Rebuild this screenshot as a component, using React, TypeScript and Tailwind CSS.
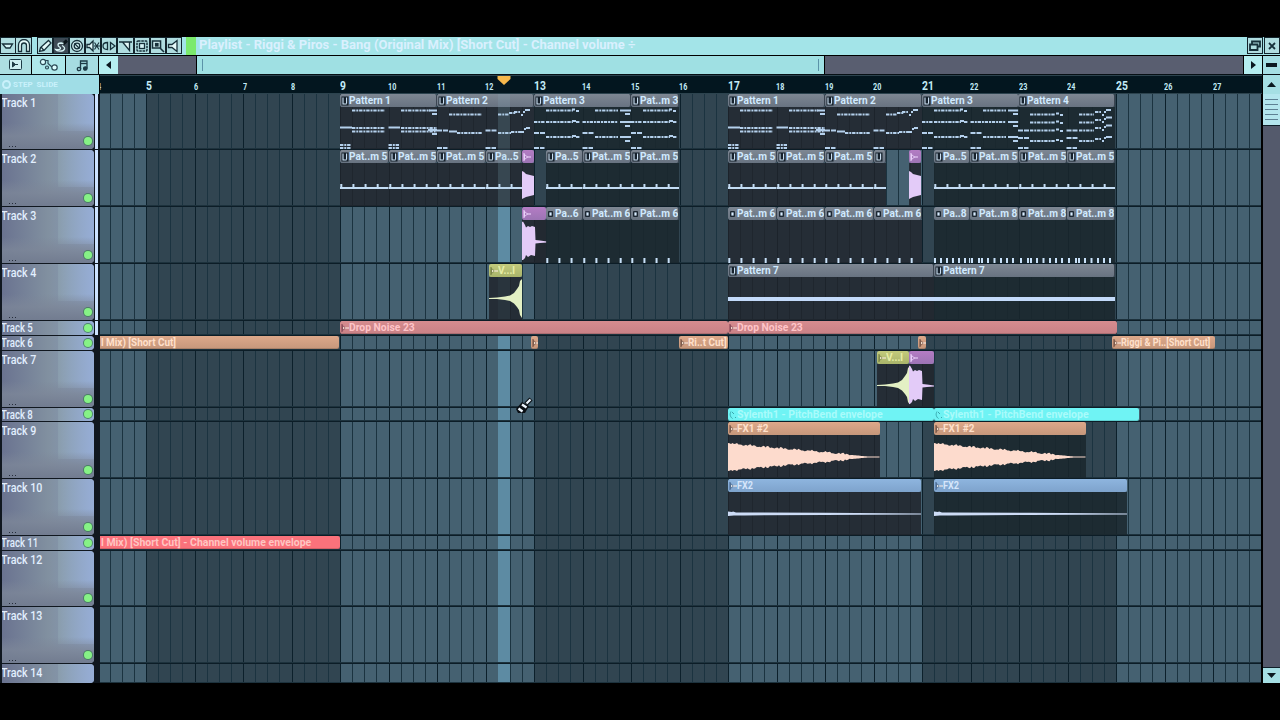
import type { ReactNode } from 'react'
import clsx from 'clsx'

type Tone = 'pattern' | 'purple' | 'yellow' | 'orange' | 'red' | 'rose' | 'cyan' | 'blue'

interface Clip {
  x: number
  w: number
  tone?: Tone
  label?: string
  art?: 'p1' | 'p2' | 'p3' | 'p4' | 'p5' | 'p6' | 'p7' | 'p8' | 'hit' | 'tail' | 'riser' | 'fx1' | 'fx2'
  cut?: boolean
}

interface Track {
  name: string
  h: number
  meter?: boolean
  clips: Clip[]
}

const run = (art: Clip['art'], n: number, xs: number[][]): Clip[] =>
  xs.map(([x, w]) => ({ x, w, art, label: w < 20 ? '' : w < 40 ? `Pa..${n}` : `Pat..m ${n}` }))

const TRACKS: Track[] = [
  {
    name: 'Track 1',
    h: 56,
    meter: true,
    clips: [
      { x: 240, w: 97, label: 'Pattern 1', art: 'p1' },
      { x: 337, w: 97, label: 'Pattern 2', art: 'p2' },
      { x: 434, w: 97, label: 'Pattern 3', art: 'p3' },
      { x: 531, w: 48, label: 'Pat..m 3', art: 'p3' },
      { x: 628, w: 97, label: 'Pattern 1', art: 'p1' },
      { x: 725, w: 97, label: 'Pattern 2', art: 'p2' },
      { x: 822, w: 97, label: 'Pattern 3', art: 'p3' },
      { x: 918, w: 97, label: 'Pattern 4', art: 'p4' },
    ],
  },
  {
    name: 'Track 2',
    h: 57,
    meter: true,
    clips: [
      ...run('p5', 5, [[240, 48.5], [288.5, 48.5], [337, 48.5], [385.5, 36.5], [446, 36.5], [482.5, 48.5], [531, 48]]),
      { x: 422, w: 12, tone: 'purple', art: 'hit' },
      ...run('p5', 5, [[628, 48.5], [676.5, 48.5], [725, 48.5], [773.5, 12], [833.5, 36.5], [870, 48.5], [918.5, 48.5], [967, 48]]),
      { x: 809, w: 12, tone: 'purple', art: 'hit' },
    ],
  },
  {
    name: 'Track 3',
    h: 57,
    meter: true,
    clips: [
      { x: 422, w: 24, tone: 'purple', art: 'tail' },
      ...run('p6', 6, [[446, 36.5], [482.5, 48.5], [531, 48], [628, 48.5], [676.5, 48.5], [725, 48.5], [773.5, 48.5]]),
      ...run('p8', 8, [[833.5, 36.5], [870, 48.5], [918.5, 48.5], [967, 48]]),
    ],
  },
  {
    name: 'Track 4',
    h: 57,
    meter: true,
    clips: [
      { x: 389, w: 33, tone: 'yellow', label: 'V...l', art: 'riser' },
      { x: 628, w: 206, label: 'Pattern 7', art: 'p7' },
      { x: 834, w: 181, label: 'Pattern 7', art: 'p7' },
    ],
  },
  {
    name: 'Track 5',
    h: 15,
    meter: true,
    clips: [
      { x: 240, w: 388, tone: 'rose', label: 'Drop Noise 23' },
      { x: 628, w: 389, tone: 'rose', label: 'Drop Noise 23' },
    ],
  },
  {
    name: 'Track 6',
    h: 15,
    clips: [
      { x: -2, w: 241, tone: 'orange', label: 'l Mix) [Short Cut]', cut: true },
      { x: 431, w: 7, tone: 'orange' },
      { x: 579, w: 49, tone: 'orange', label: 'Ri..t Cut]' },
      { x: 818, w: 8, tone: 'orange' },
      { x: 1012, w: 103, tone: 'orange', label: 'Riggi & Pi..[Short Cut]' },
    ],
  },
  {
    name: 'Track 7',
    h: 57,
    clips: [
      { x: 777, w: 32, tone: 'yellow', label: 'V...l', art: 'riser' },
      { x: 809, w: 25, tone: 'purple', art: 'tail' },
    ],
  },
  {
    name: 'Track 8',
    h: 14,
    clips: [
      { x: 628, w: 206, tone: 'cyan', label: 'Sylenth1 - PitchBend envelope' },
      { x: 834, w: 205, tone: 'cyan', label: 'Sylenth1 - PitchBend envelope' },
    ],
  },
  {
    name: 'Track 9',
    h: 57,
    clips: [
      { x: 628, w: 152, tone: 'orange', label: 'FX1 #2', art: 'fx1' },
      { x: 834, w: 152, tone: 'orange', label: 'FX1 #2', art: 'fx1' },
    ],
  },
  {
    name: 'Track 10',
    h: 57,
    clips: [
      { x: 628, w: 193, tone: 'blue', label: 'FX2', art: 'fx2' },
      { x: 834, w: 193, tone: 'blue', label: 'FX2', art: 'fx2' },
    ],
  },
  {
    name: 'Track 11',
    h: 15,
    clips: [{ x: -2, w: 242, tone: 'red', label: 'l Mix) [Short Cut] - Channel volume envelope', cut: true }],
  },
  { name: 'Track 12', h: 56, clips: [] },
  { name: 'Track 13', h: 57, clips: [] },
  { name: 'Track 14', h: 20, clips: [] },
]

const TONES: Record<Tone, string> = {
  pattern: 'bg-linear-to-b from-[#7e8793] to-[#687381] text-[#d0eaff] rounded-none border-r border-[#3a4450]',
  purple: 'bg-linear-to-b from-[#b47cc4] to-[#9c74b4] text-[#e9d2ff]',
  yellow: 'bg-linear-to-b from-[#c3cb7c] to-[#a9b46a] text-[#e7eea6]',
  orange: 'bg-linear-to-b from-[#dda88a] to-[#c6977b] text-[#ffe0cb]',
  red: 'bg-[#fb727b] text-[#ffc5c2]',
  rose: 'bg-linear-to-b from-[#d68c8f] to-[#c98186] text-[#ffc4c8]',
  cyan: 'bg-[#6ff3f4] text-[#a9fbfb]',
  blue: 'bg-linear-to-b from-[#8eb5df] to-[#7ea3cc] text-[#d6e6fb]',
}

// x1, x2, y, gap between notes (none = held note)
type Note = [number, number, number, number?]

const NOTES: Record<string, Note[]> = {
  p1: [
    [12, 45, 3.5, 1], [0, 12, 20.5], [12, 45, 21, 1], [12, 45, 24.5, 1], [0, 11, 38, 1], [0, 11, 41, 1],
    [61, 90, 3.5, 1], [89, 97, 3.5], [92, 97, 7], [48.5, 60, 20.5], [61, 97, 21, 1], [61, 97, 24.5, 1], [88, 97, 23], [92, 97, 27],
    [48.5, 59.5, 38, 1], [48.5, 59.5, 41, 1],
  ],
  p2: [
    [12, 45, 7.5, 1], [0, 11, 23.5, 2], [12, 20, 24.5], [20, 45, 26, 1], [0, 10.5, 41, 2],
    [61, 72, 7.5, 1], [72, 79, 6, 1], [77, 83, 5, 1], [84, 86, 8], [86, 88, 5], [88, 93, 3],
    [48.5, 60, 23.5, 2], [61, 74, 26, 1], [74, 84, 25, 1], [84, 87, 25], [87, 89, 22], [89, 93, 21], [48.5, 59, 41, 2],
  ],
  p3: [
    [12, 39, 3.5, 1], [38, 41, 2.5], [42, 45, 4, 1], [0, 11, 15, 1], [12, 39, 15, 1], [38, 42, 14], [42, 46, 15, 1],
    [0, 11, 26, 2], [12, 39, 30, 1], [38, 42, 29], [42, 46, 30, 1], [0, 10.5, 41, 2],
    [61, 84, 3.5, 1], [86, 97, 3.5], [91, 96, 7], [48.5, 84, 15, 1], [86, 97, 15], [91, 96, 19],
    [48.5, 60, 26, 2], [61, 84, 30, 1], [86, 97, 30], [91, 96, 34], [48.5, 59, 41, 2],
  ],
  p4: [
    [12, 37, 7.5, 1], [12, 37, 15.5, 1], [0, 11, 23.5, 2], [12, 37, 23.5, 1], [0, 11, 31, 2], [12, 37, 34, 1], [0, 10.5, 41, 2],
    [38, 41, 6.5], [38, 41, 14.5], [38, 41, 22.5], [38, 41, 33], [42, 45, 8], [42, 45, 16], [42, 45, 24], [42, 45, 34],
    [61, 76, 7.5, 1], [61, 76, 15.5, 1], [48.5, 60, 23.5, 2], [61, 76, 23.5, 1], [48.5, 60, 31, 2], [61, 76, 34, 1], [48.5, 59, 41, 2],
    [77, 83, 5, 1], [77, 83, 13, 1], [77, 83, 21, 1], [77, 83, 32, 1],
    [84, 86, 8], [86, 88, 5], [88, 93, 3], [84, 86, 15], [86, 88, 12], [88, 94, 10.5],
    [84, 86, 23], [86, 88, 20], [88, 94, 18.5], [84, 86, 34], [86, 88, 31], [88, 94, 30],
  ],
}

function decay(w: number, start: number, end: number, mid: number) {
  const up: string[] = []
  const down: string[] = []
  for (let x = 0; x <= w; x += 1.5) {
    const env = Math.max(0.6, start * Math.max(0, 1 - x / end))
    const rough = env > 2 ? Math.abs(Math.sin(x * 2.3) * Math.cos(x * 0.71)) * 2.2 - 0.4 : 0
    const h = x < 2 ? env + 1 : env + rough
    up.push(`${x},${mid - h}`)
    down.unshift(`${x},${mid + h}`)
  }
  return [...up, ...down].join(' ')
}

function Art({ clip }: { clip: Clip }) {
  const { art, w } = clip
  let body: ReactNode = null
  if (art && NOTES[art]) {
    body = NOTES[art]
      .filter(([x1]) => x1 < w - 1)
      .map(([x1, x2, y, gap], i) => (
        <line
          key={i}
          x1={x1}
          x2={x2}
          y1={y}
          y2={y}
          stroke="#b4d0ec"
          strokeWidth="2"
          strokeDasharray={gap ? (gap === 2 ? '5 1' : '3.4 .9 2 .8') : undefined}
        />
      ))
  } else if (art === 'p5') {
    body = (
      <>
        <rect x="0" y="24" width={w} height="2" fill="#c3dcf4" />
        {[0, 1, 2, 3]
          .filter((i) => i * 12.125 < w - 2)
          .map((i) => (
            <rect key={i} x={i * 12.125 + 0.3} y="21" width="2" height="4" fill="#c3dcf4" />
          ))}
      </>
    )
  } else if (art === 'p6') {
    body = [0, 1, 2, 3]
      .filter((i) => i * 12.125 < w - 2)
      .map((i) => <rect key={i} x={i * 12.125 + 0.3} y="38" width="2" height="5" fill="#c9e2fa" />)
  } else if (art === 'p8') {
    const hits = w < 40 ? [0, 6, 12, 18, 24, 30, 35] : [1, 8, 11, 17, 23.5, 30, 36, 42]
    body = hits.map((x) => <rect key={x} x={x} y="38" width="2" height="5" fill="#c9e2fa" />)
  } else if (art === 'p7') {
    body = <rect x="0" y="20" width={w} height="4" fill="#c3dafa" />
  } else if (art === 'hit') {
    body = <polygon points="0,8 2,9 4,11 8,12 12,13 12,32 8,33 4,34 2,35 0,36" fill="#e3cbf8" />
  } else if (art === 'tail') {
    body = (
      <polygon
        points="0,2 1,1.5 3,5 4,7.5 6,6 8,7 10,6 13,7 13.500,20 18,20.5 25,21.5 25,22.5 18,23 13.500,23.5 13,36 9,35 6,37 4,35 3,38 1,40 0,40"
        fill="#e3cbf8"
      />
    )
  } else if (art === 'riser') {
    body = (
      <polygon
        points="0,21 8,20.5 16,19.5 21,18.5 25,16 28,12 30,9 31,4 33,2 33,41 31,38 30,33 28,30 25,26.5 21,24 16,23 8,22 0,22"
        fill="#e3f0c4"
      />
    )
  } else if (art === 'fx1') {
    body = <polygon points={decay(w, 13, 146, 22)} fill="#fddbcd" />
  } else if (art === 'fx2') {
    body = (
      <polygon
        points={`0,19.5 4,20 5,19.5 8,20.5 16,20.5 ${w * 0.5},20.8 ${w},21.5 ${w},22.5 ${w * 0.5},22.9 16,23.5 6,23.5 0,24`}
        fill="#cddcf6"
      />
    )
  }
  return (
    <svg width={w} height="43" className="absolute inset-0 overflow-visible">
      {body}
    </svg>
  )
}

function ClipBadge({ tone, art }: { tone: Tone; art?: string }) {
  if (tone === 'pattern') {
    const small = art === 'p6' || art === 'p8'
    return (
      <svg width="8" height="10" viewBox="0 0 8 10" className="ml-px shrink-0">
        {small ? (
          <>
            <rect x="1" y="2" width="5" height="6" rx="1" fill="#1b2631" />
            <rect x="2.4" y="3.4" width="2.2" height="3.2" fill="#d8ecff" />
          </>
        ) : (
          <>
            <rect x=".5" y=".5" width="7" height="9" fill="#15202b" />
            <path d="M2 1.5v6.5h3.6M5.6 1.5v6" fill="none" stroke="#d3e8fa" strokeWidth="1.1" />
          </>
        )}
      </svg>
    )
  }
  if (tone === 'cyan') {
    return (
      <svg width="8" height="10" viewBox="0 0 8 10" className="ml-px shrink-0" fill="none" stroke="#3aa7ad">
        <path d="M2 1.5C.5 4 1 7 3.5 8.5M3 2l2 2M6 7.5h1" />
      </svg>
    )
  }
  return (
    <svg
      width="8"
      height="10"
      viewBox="0 0 8 10"
      className={clsx(
        'ml-px shrink-0',
        tone === 'orange' && 'text-[#6d4a3c]',
        tone === 'yellow' && 'text-[#6f7a3c]',
        tone === 'blue' && 'text-[#3f5f88]',
        tone === 'purple' && 'text-[#f0d8ff]',
        tone === 'rose' && 'text-[#7c3e4e]',
      )}
      fill="none"
      stroke="currentColor"
    >
      <path d="M1 1v8" />
      <path d="M1.500 2.500L4.500 5 1.500 7.500z" fill={tone === 'purple' ? 'none' : '#fff6e8'} fillOpacity=".7" strokeWidth=".8" />
      <path d="M4 5h4" stroke={tone === 'purple' ? '#f0d8ff' : '#fff0e6'} strokeWidth="1.200" />
    </svg>
  )
}

function ClipView({ clip }: { clip: Clip }) {
  const tone = clip.tone ?? 'pattern'
  const overLight = (clip.x >= 240 && clip.x < 434) || (clip.x >= 628 && clip.x < 822)
  return (
    <div className="absolute top-0 bottom-0" style={{ left: clip.x, width: clip.w }}>
      <div
        className={clsx(
          'flex h-[13px] items-center overflow-hidden rounded-xs whitespace-nowrap',
          TONES[tone],
          !clip.art && 'shadow-[inset_0_-1px_0_#00000026]',
        )}
      >
        {!clip.cut && <ClipBadge tone={tone} art={clip.art} />}
        {clip.label && (
          <span
            className={clsx(
              'inline-block origin-left text-[11px] leading-3 font-bold',
              tone === 'red' && 'scale-x-[0.955]',
              tone === 'cyan' && 'scale-x-[0.96]',
              tone === 'rose' && 'scale-x-[0.94]',
              tone === 'orange' && (clip.w === 103 ? 'scale-x-[0.83]' : 'scale-x-[0.9]'),
              tone === 'blue' && 'scale-x-[0.82]',
              (tone === 'pattern' || tone === 'yellow') && 'scale-x-[0.92]',
              clip.cut && 'ml-[3px]',
            )}
          >
            {clip.label}
          </span>
        )}
      </div>
      {clip.art && (
        <div
          className={clsx(
            'relative h-[43px]',
            overLight ? 'bg-[#20242b]/85' : 'bg-[#1a272d]/85',
          )}
        >
          <Art clip={clip} />
        </div>
      )}
    </div>
  )
}

function TrackHeader({ track }: { track: Track }) {
  const tall = track.h > 20
  return (
    <div className="flex w-[100px] shrink-0 bg-[#10171f]">
      <div
        className={clsx(
          'relative mr-px mb-px ml-0.5 w-[92px] overflow-hidden rounded-r text-[#e2efff]',
          'bg-linear-to-r from-[#6a7390] via-[#8190a0] to-[#8b9fc0]',
        )}
      >
        <div className="absolute top-0 right-0 h-[37px] w-[36px] bg-linear-to-r from-[#8ea3b0]/60 to-[#96add6]" />
        {tall && (
          <div className="absolute right-0 bottom-0 left-0 h-[26px] bg-linear-to-b from-[#7f8a9c]/0 via-[#7c8698]/80 to-[#727c90]" />
        )}
        <span
          className={clsx(
            'absolute left-0 -ml-px origin-left whitespace-nowrap',
            track.h > 15
              ? 'top-px scale-x-[0.82] text-[13px] leading-4 font-medium'
              : 'top-0 scale-x-[0.8] text-[12px] leading-[14px] font-medium',
          )}
        >
          {track.name}
        </span>
        {tall && (
          <div className="absolute bottom-[2px] left-[7px] flex gap-[2px]">
            <div className="size-px bg-[#262d3b]" />
            <div className="size-px bg-[#262d3b]" />
            <div className="size-px bg-[#262d3b]" />
          </div>
        )}
        {track.h !== 20 && (
          <span
            className={clsx(
              'absolute right-[2.500px] size-[8px] rounded-full bg-[#86f286] ring-1 ring-[#3f7a58]/80',
              tall ? 'bottom-[4px]' : 'bottom-[3px]',
            )}
          />
        )}
      </div>
      {track.meter && <div className="mb-px w-[3px] bg-[#cde3ff]" />}
    </div>
  )
}

function Grid() {
  const bars = Array.from({ length: 24 }, (_, i) => i + 4)
  return (
    <div className="absolute inset-y-0 right-0 left-[100px] overflow-hidden">
      <div className="-ml-[2.5px] flex h-full">
        {bars.map((n) => (
          <div
            key={n}
            className={clsx(
              'flex w-[48.5px] shrink-0 border-l border-[#0c202b]',
              n === 4 || (n >= 9 && n < 13) || (n >= 17 && n < 21) || n >= 25 ? 'bg-[#456171]' : 'bg-[#314551]',
            )}
          >
            <div className="flex-1" />
            <div className="flex-1 border-l border-[#1b3340]" />
            <div className="flex-1 border-l border-[#1b3340]" />
            <div className="flex-1 border-l border-[#1b3340]" />
          </div>
        ))}
      </div>
      <div className="absolute inset-y-0 left-[398px] w-3 bg-[#5d8ba3]" />
    </div>
  )
}

function Tool({ children, active, className }: { children: ReactNode; active?: boolean; className?: string }) {
  return (
    <div
      className={clsx(
        'flex h-[17px] w-4 shrink-0 items-center justify-center border border-[#13242c]',
        active ? 'bg-[#3d4a55]' : 'bg-[#b0dde0]',
        className,
      )}
    >
      <svg width="14" height="14" viewBox="0 0 14 14" className="shrink-0" fill="none" stroke="#17303a" strokeWidth="1.3">
        {children}
      </svg>
    </div>
  )
}

function TitleBar() {
  return (
    <div className="flex h-[18px] items-start bg-[#a3e4e8]">
      <Tool>
        <path d="M1.500 5h10l-2.500 4h-4z" fill="#d5f3f5" />
      </Tool>
      <Tool className="-ml-px w-[17px]">
        <path d="M4.500 12.500h-3V6a5 5 0 0 1 11 0v6.500h-3V6.500a2.200 2.200 0 0 0-5 0z" fill="#e5fafa" />
      </Tool>
      <div className="w-[5px]" />
      <Tool>
        <path d="M1.500 12.500l1-4 8-7L13 4 6 11.500z" fill="#e5fafa" />
        <path d="M3 8l3 3.500" />
      </Tool>
      <Tool active>
        <path d="M13 1.500L9 5" stroke="#0b151b" strokeWidth="3" />
        <path d="M9.500 4.500L7 4C3 4 3.500 7 5.500 8s1 3.500-4 2.500c1 2 8 2.500 9-.5.500-2-1.500-3-2.500-3.500" stroke="#d6f3f5" />
      </Tool>
      <Tool>
        <circle cx="7" cy="7" r="5.500" fill="#d5f3f5" />
        <circle cx="7" cy="7" r="2.800" />
        <path d="M4.500 4.500l5 5" />
      </Tool>
      <Tool>
        <path d="M1 5.500h2.500L7 2v10L3.500 8.500H1z" fill="#e5fafa" />
        <path d="M8.500 3.500l4.500 7M13 3.500l-4.500 7M8 7h6" strokeWidth="1.100" />
      </Tool>
      <Tool>
        <path d="M5.500 3.500v7C2.500 10.500 1 9 1 7s1.500-3.500 4.500-3.500zM8.500 3.500L13 7l-4.500 3.500z" />
      </Tool>
      <Tool className="w-[17px]">
        <path d="M0 3h13M3.500 3l7 8.500V3" fill="#e5fafa" />
      </Tool>
      <Tool>
        <rect x="2" y="2" width="10" height="10" rx="1" strokeDasharray="2.500 .8" strokeWidth="1.500" />
        <rect x="4.500" y="4.500" width="5" height="5" fill="#d5f3f5" />
      </Tool>
      <Tool>
        <path d="M1.500 2h8v7h-8zM9 9l4 4" fill="#d5f3f5" strokeWidth="1.600" />
        <rect x="4.500" y="4.500" width="2.500" height="2.500" fill="#17303a" />
      </Tool>
      <Tool>
        <path d="M1.500 5.500H5L10 1.500v11L5 8.500H1.500z" fill="#e5fafa" />
      </Tool>
      <div className="ml-1 h-full w-[10px] bg-[#7bea6c]" />
      <span className="ml-[3px] inline-block origin-left text-[13px] leading-[15px] font-bold whitespace-nowrap text-[#daf0fe]">
        Playlist - Riggi &amp; Piros - Bang (Original Mix) [Short Cut] - Channel volume ÷
      </span>
      <div className="ml-auto flex">
        <Tool>
          <path d="M4 5V2.500h8v5H9.500M2 5.500h7.500v5.500H2z" strokeWidth="1.800" />
        </Tool>
        <Tool className="ml-px">
          <path d="M4 4l6 6M10 4l-6 6" strokeWidth="1.800" />
        </Tool>
      </div>
    </div>
  )
}

function ScrollRow() {
  return (
    <div className="flex h-[18px]">
      <div className="flex w-[31px] items-center justify-center bg-[#addfe2]">
        <svg width="16" height="14" fill="none" stroke="#1d3a45">
          <rect x="1.500" y="1.500" width="12" height="10" rx="1" fill="#cdeff2" />
          <path d="M4.500 4v5l3-2.500zM7 6.500h3" fill="#1d3a45" />
        </svg>
      </div>
      <div className="ml-px flex w-[33px] items-center justify-center bg-[#aee8ea]">
        <svg width="20" height="14" fill="none" stroke="#2c4a55" strokeWidth="1.200">
          <circle cx="4" cy="4" r="2.600" fill="#dff" />
          <circle cx="15.500" cy="9.500" r="2.700" fill="#dff" />
          <circle cx="8" cy="9.500" r="1.500" />
          <path d="M6 2.500h3v3l4 3.500" />
        </svg>
      </div>
      <div className="ml-px flex w-8 items-center justify-center bg-[#a6dce1]">
        <svg width="13" height="13" fill="none" stroke="#1d3a45" strokeWidth="1.300">
          <path d="M4.500 10V2h6.500v7.500" />
          <circle cx="3" cy="10" r="1.700" />
          <circle cx="9.300" cy="9.500" r="1.700" fill="#1d3a45" />
          <path d="M4.500 4.500H11" />
        </svg>
      </div>
      <div className="ml-px flex w-[19px] items-center justify-center bg-[#b5eef0]">
        <svg width="5" height="8">
          <path d="M5 0v8L0 4z" fill="#0b1820" />
        </svg>
      </div>
      <div className="w-[78px] bg-[#595e70]" />
      <div className="ml-px flex w-[627px] items-center justify-between bg-[#9fe0e3] px-[5px]">
        <div className="h-3 w-px bg-[#5b93a8]" />
        <div className="h-3 w-px bg-[#5b93a8]" />
      </div>
      <div className="mr-px ml-px flex-1 bg-[#595e70]" />
      <div className="mr-px flex w-[18px] items-center justify-center bg-[#b5eef0]">
        <svg width="5" height="8">
          <path d="M0 0v8l5-4z" fill="#0b1820" />
        </svg>
      </div>
      <div className="flex w-[17px] items-center justify-center bg-[#a5dfe4]">
        <div className="h-1 w-[11px] bg-[#0b1820]" />
      </div>
    </div>
  )
}

function Ruler() {
  const bars = Array.from({ length: 24 }, (_, i) => i + 4)
  return (
    <div className="flex h-[19px]">
      <div className="flex w-[99px] items-center overflow-hidden bg-[#a0dde6] pl-[2px] text-[8px] font-bold text-[#c9f1fb]">
        <span className="size-[9px] rounded-full border-2 border-[#c9f1fb]" />
        <span className="ml-0.5">STEP</span>
        <span className="ml-1">SLIDE</span>
      </div>
      <div className="relative ml-px flex-1 overflow-hidden border-y border-[#2c434e] bg-[#03161f]">
        <div className="-ml-[4px] flex h-full items-center text-[#c3ecf8]">
          {bars.map((n) => (
            <div key={n} className="w-[48.5px] shrink-0 pl-px">
              <span
                className={clsx(
                  'inline-block origin-left font-bold',
                  n % 4 === 1 ? 'scale-x-[0.86] text-[12px]' : 'scale-x-[0.8] text-[9px]',
                )}
              >
                {n}
              </span>
            </div>
          ))}
        </div>
        <svg width="14" height="10" className="absolute top-0 left-[397px]">
          <path d="M.5 0h13v3L7 9 .5 3z" fill="#f8b84c" />
        </svg>
      </div>
      <div className="ml-px flex w-[17px] items-center justify-center bg-[#a5dfe4]">
        <svg width="9" height="5">
          <path d="M0 5h9L4.500 0z" fill="#0b1820" />
        </svg>
      </div>
    </div>
  )
}

function VerticalScroll() {
  return (
    <div className="flex w-[17px] shrink-0 flex-col bg-[#545a6c]">
      <div className="flex h-8 flex-col items-stretch justify-center gap-[4px] border-b border-[#10202a] bg-[#b4e6ee] px-0.5">
        {[0, 1, 2, 3, 4].map((i) => (
          <div key={i} className="h-px bg-[#5d8093]" />
        ))}
      </div>
      <div className="flex-1" />
      <div className="flex h-4 items-center justify-center border-t border-[#10202a] bg-[#a5dfe4]">
        <svg width="9" height="5">
          <path d="M0 0h9L4.500 5z" fill="#0b1820" />
        </svg>
      </div>
    </div>
  )
}

export default function App() {
  return (
    <div className="h-[720px] w-[1280px] overflow-hidden bg-black pt-[37px] font-['Roboto','Liberation_Sans',sans-serif]">
      <TitleBar />
      <div className="h-px bg-black" />
      <ScrollRow />
      <div className="h-px bg-[#071015]" />
      <Ruler />
      <div className="flex h-[589px] overflow-hidden">
        <div className="relative mr-0.5 w-[1261px] shrink-0">
          <Grid />
          {TRACKS.map((track) => (
            <div key={track.name} className="relative flex" style={{ height: track.h }}>
              <TrackHeader track={track} />
              <div className="relative flex-1 overflow-hidden border-b border-[#0c1d27] shadow-[inset_0_-1px_0_#1d323d]">
                {track.clips.map((clip) => (
                  <ClipView key={clip.x} clip={clip} />
                ))}
              </div>
            </div>
          ))}
          {/* the play position glows through the clip bodies */}
          <div className="absolute top-0 left-[498px] h-[112px] w-3 bg-[#8fb5cc]/15" />
          <svg width="18" height="18" className="absolute top-[303px] left-[515px]">
            <path d="M16 2L11 7" stroke="#0a0f14" strokeWidth="4.500" />
            <path d="M1 12l6-7 7 4-4 7-7 0z" fill="#0a0f14" />
            <path d="M15.500 2.500L11.500 6.500" stroke="#eef7ff" strokeWidth="2.200" />
            <path d="M7 7.500l4.500 3M3.500 11.500l4 3" stroke="#eef7ff" strokeWidth="2.400" />
          </svg>
        </div>
        <VerticalScroll />
      </div>
    </div>
  )
}
